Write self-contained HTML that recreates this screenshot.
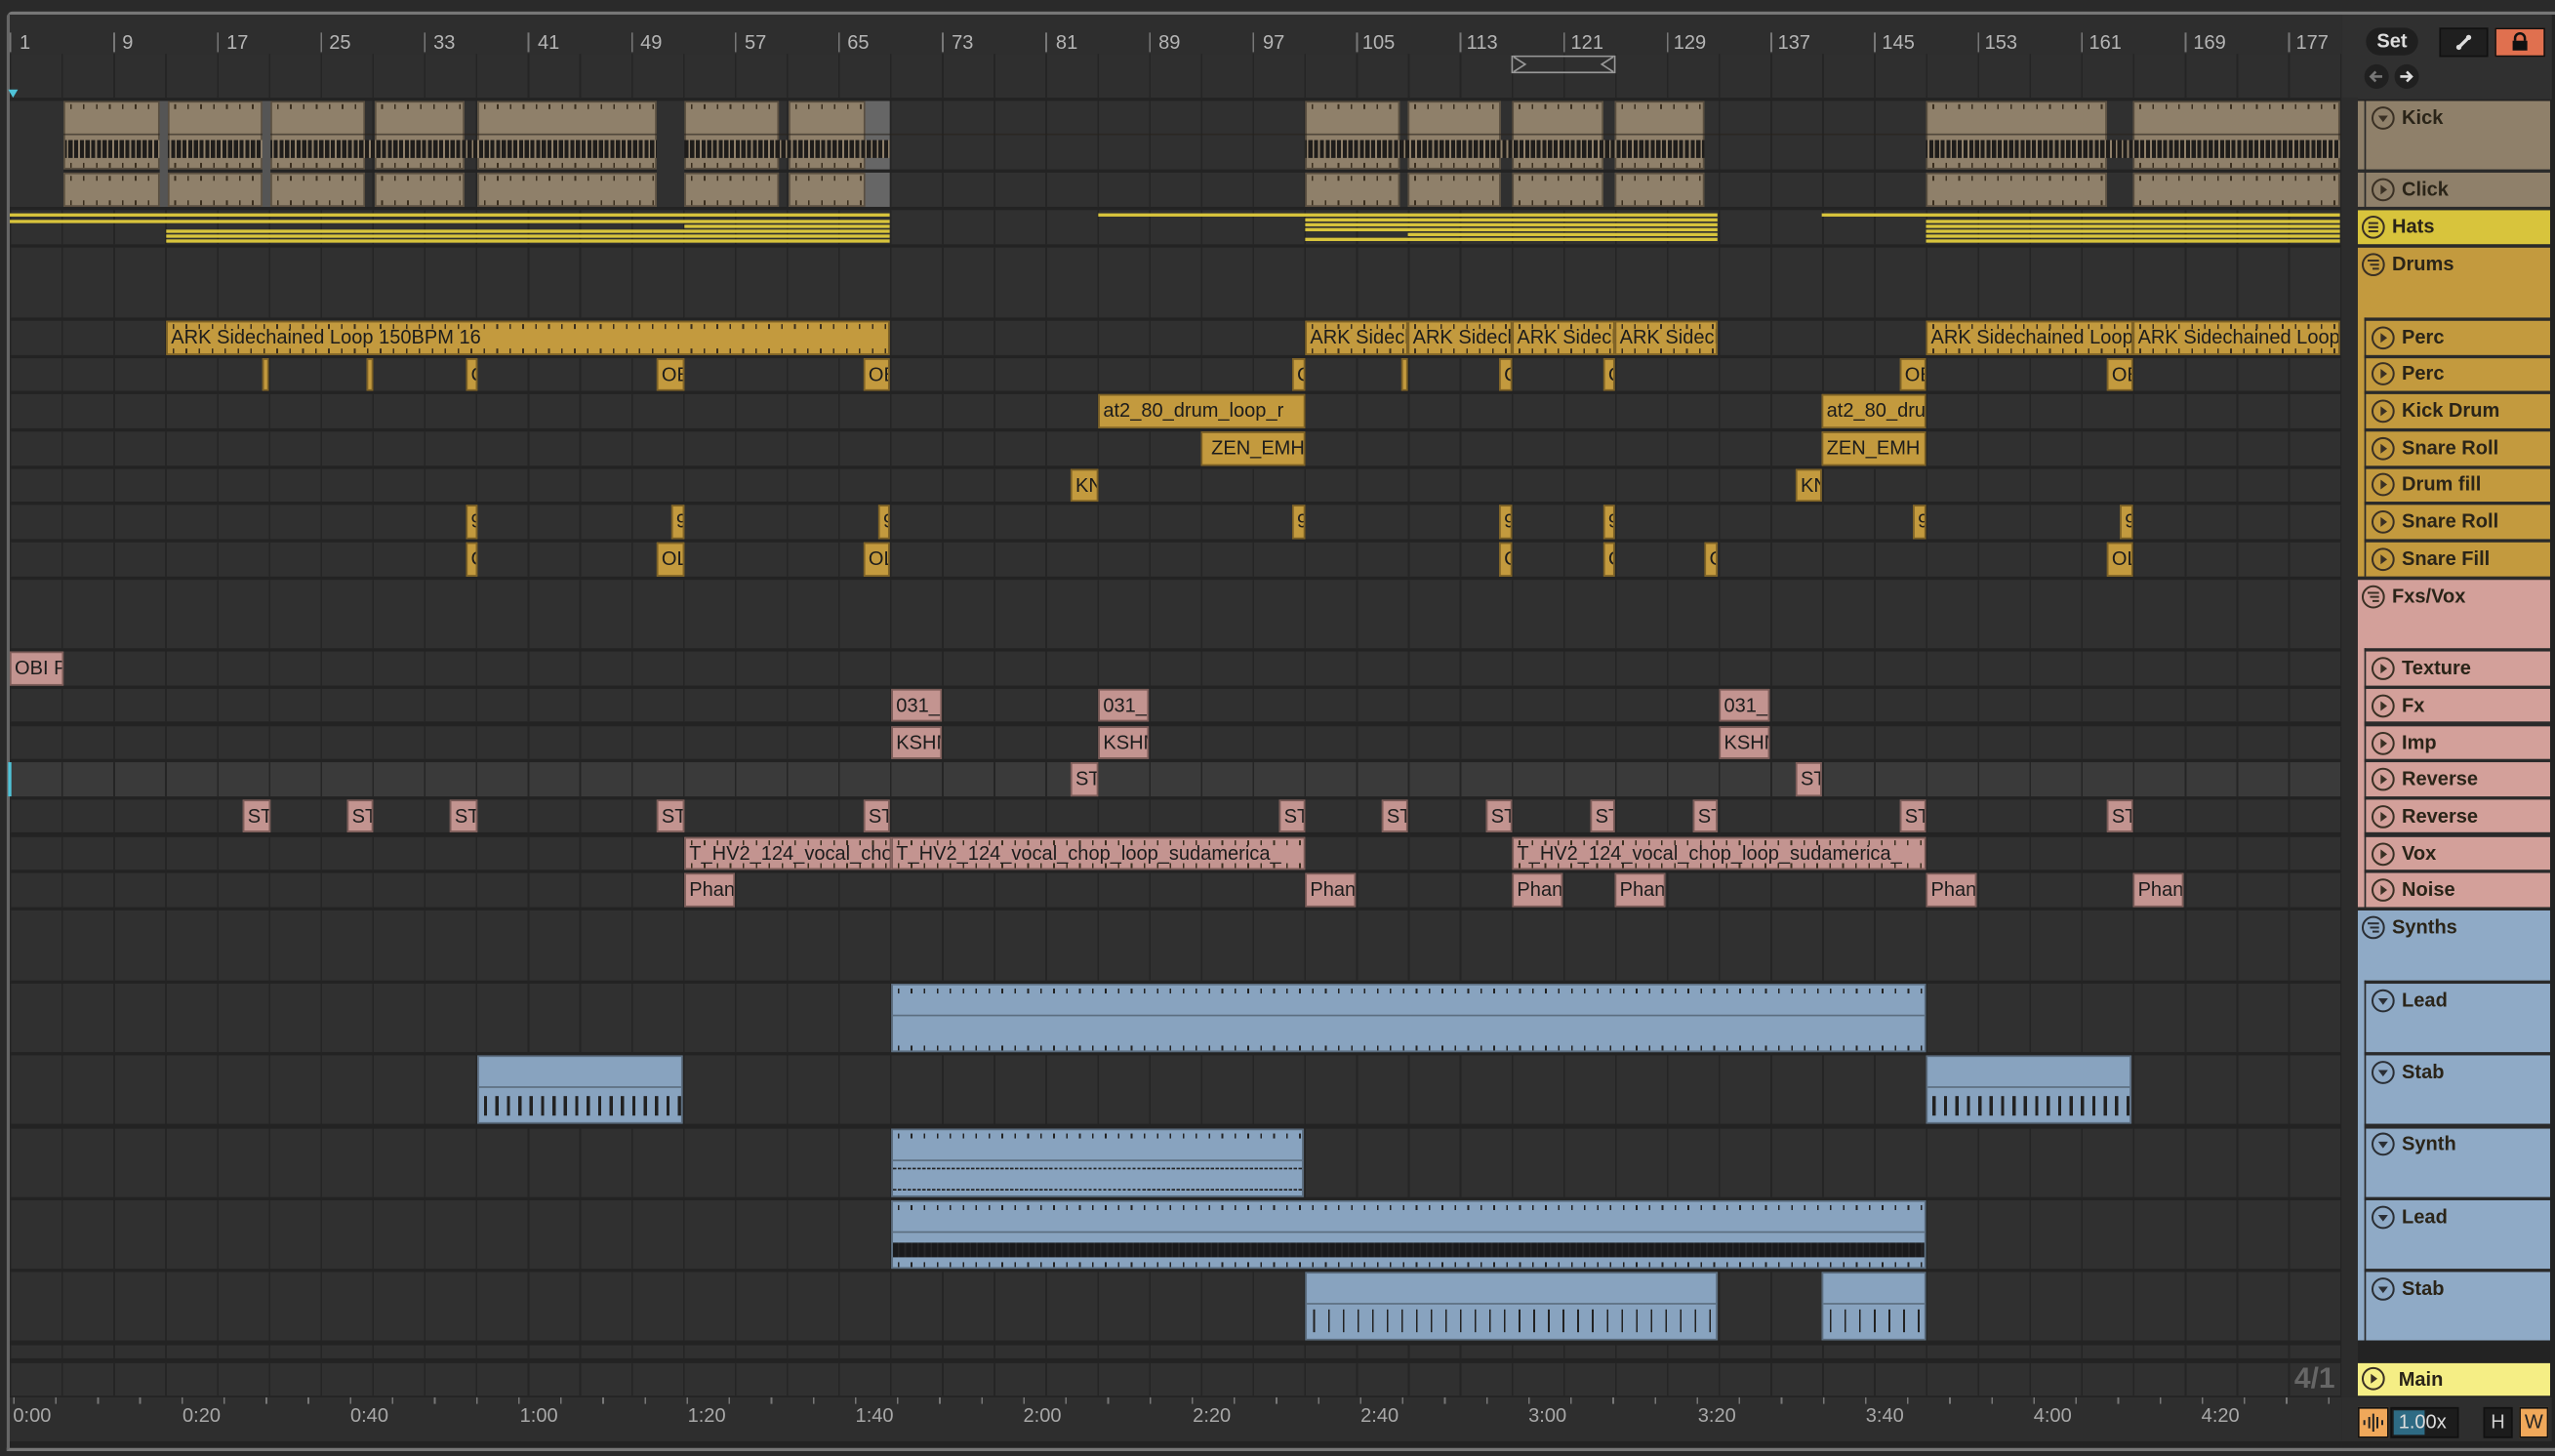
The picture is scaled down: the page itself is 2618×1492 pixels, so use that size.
<!DOCTYPE html>
<html><head><meta charset="utf-8"><style>
*{margin:0;padding:0}
html,body{width:2618px;height:1492px;overflow:hidden;background:#2a2a2a}
#w{position:absolute;left:0;top:0;width:1568px;height:894px;transform:scale(1.66964,1.66891);transform-origin:0 0;background:#2a2a2a;font-family:"Liberation Sans",sans-serif}
.frame{position:absolute;left:4px;top:7px;width:1562px;height:880px;border-top:2px solid #777;border-left:2px solid #666;border-bottom:2px solid #777;border-radius:4px 0 0 0;background:#232323}
.r{position:absolute;left:6px;width:1431px;background:#303030 repeating-linear-gradient(90deg,#252525 0 1px,transparent 1px 31.78px)}
.c{position:absolute;overflow:hidden;white-space:nowrap;font-size:12px;color:#1c1c1c;box-sizing:border-box;padding-left:2px;line-height:19px}
.tk{background-image:repeating-linear-gradient(90deg,transparent 0 3px,#3a2e1e 3px 4px,transparent 4px 7.945px),repeating-linear-gradient(90deg,transparent 0 3px,#3a2e1e 3px 4px,transparent 4px 7.945px);background-size:100% 3px,100% 3px;background-position:0 1px,0 100%;background-repeat:no-repeat}
.o{background-color:#c39a3e;border:1px solid #7e6226}
.p{background-color:#c39490;border:1px solid #7d5d59}
.t{background-color:#8f806a;border:1px solid #5a4f40}
.b{background-color:#88a3bf;border:1px solid #5c6e80}
.g{position:absolute;left:1447px;width:118px}
.h{position:absolute;left:1452px;width:113px;font-weight:bold;font-size:12px;color:#2a2418;box-sizing:border-box;padding-left:22px;line-height:21px}
.h svg,.g svg{position:absolute;left:3px;top:3px}
.gl{position:absolute;font-weight:bold;font-size:12px;color:#2a2418;line-height:21px;padding-left:21px}
.n{position:absolute;top:19px;font-size:12px;color:#b5b5b5}
.tm{position:absolute;top:862px;font-size:12px;color:#a8a8a8}
.hat{position:absolute;height:2px;background:#d8c43c}
</style></head><body><div id="w">
<div class="frame"></div>
<!-- top ruler -->
<div style="position:absolute;left:6px;top:9px;width:1431px;height:24px;background:#2e2e2e"></div>
<div class="r" style="top:33px;height:27px;background-color:#2f2f2f"></div>
<div style="position:absolute;left:6px;top:20px;width:1431px;height:12px;background:repeating-linear-gradient(90deg,#777 0 1px,transparent 1px 63.56px)"></div>
<span class="n" style="left:12px">1</span><span class="n" style="left:75px">9</span><span class="n" style="left:139px">17</span><span class="n" style="left:202px">25</span><span class="n" style="left:266px">33</span><span class="n" style="left:330px">41</span><span class="n" style="left:393px">49</span><span class="n" style="left:457px">57</span><span class="n" style="left:520px">65</span><span class="n" style="left:584px">73</span><span class="n" style="left:648px">81</span><span class="n" style="left:711px">89</span><span class="n" style="left:775px">97</span><span class="n" style="left:836px">105</span><span class="n" style="left:900px">113</span><span class="n" style="left:964px">121</span><span class="n" style="left:1027px">129</span><span class="n" style="left:1091px">137</span><span class="n" style="left:1155px">145</span><span class="n" style="left:1218px">153</span><span class="n" style="left:1282px">161</span><span class="n" style="left:1346px">169</span><span class="n" style="left:1409px">177</span>
<svg style="position:absolute;left:927px;top:34px" width="66" height="12"><rect x="1" y="0.5" width="63" height="10" fill="none" stroke="#999" stroke-width="1"/><path d="M2 1 L9 5.5 L2 10 M63 1 L56 5.5 L63 10" fill="none" stroke="#999"/></svg>
<div style="position:absolute;left:5px;top:55px;width:0;height:0;border-left:3px solid transparent;border-right:3px solid transparent;border-top:5px solid #4fc3d8"></div>

<!-- rows -->
<div class="r" style="top:62px;height:42px"></div>
<div class="r" style="top:106px;height:21px"></div>
<div class="r" style="top:129px;height:21px"></div>
<div class="r" style="top:152px;height:43px"></div>
<div class="r" style="top:197px;height:21px"></div>
<div class="r" style="top:220px;height:20px"></div>
<div class="r" style="top:242px;height:21px"></div>
<div class="r" style="top:265px;height:21px"></div>
<div class="r" style="top:288px;height:20px"></div>
<div class="r" style="top:310px;height:21px"></div>
<div class="r" style="top:333px;height:21px"></div>
<div class="r" style="top:356px;height:42px"></div>
<div class="r" style="top:400px;height:21px"></div>
<div class="r" style="top:423px;height:20px"></div>
<div class="r" style="top:446px;height:20px"></div>
<div class="r" style="top:468px;height:21px;background-color:#3a3a3a"></div>
<div class="r" style="top:491px;height:20px"></div>
<div class="r" style="top:514px;height:20px"></div>
<div class="r" style="top:536px;height:21px"></div>
<div class="r" style="top:559px;height:43px"></div>
<div class="r" style="top:604px;height:42px"></div>
<div class="r" style="top:648px;height:42px"></div>
<div class="r" style="top:693px;height:42px"></div>
<div class="r" style="top:737px;height:42px"></div>
<div class="r" style="top:781px;height:42px"></div>
<div class="r" style="top:826px;height:8px"></div>
<div class="r" style="top:837px;height:20px"></div>
<div style="position:absolute;left:5px;top:468px;width:2px;height:21px;background:#4fc3d8"></div>

<!-- Kick clips -->
<div id="kick">
<div class="c t tk" style="left:39px;top:62px;width:59px;height:42px"></div>
<div class="c t tk" style="left:103px;top:62px;width:58px;height:42px"></div>
<div class="c t tk" style="left:166px;top:62px;width:58px;height:42px"></div>
<div class="c t tk" style="left:230px;top:62px;width:55px;height:42px"></div>
<div class="c t tk" style="left:293px;top:62px;width:110px;height:42px"></div>
<div class="c t tk" style="left:420px;top:62px;width:58px;height:42px"></div>
<div class="c t tk" style="left:484px;top:62px;width:47px;height:42px"></div>
<div class="c" style="left:531px;top:62px;width:15px;height:42px;background:#666"></div>
<div class="c t tk" style="left:801px;top:62px;width:58px;height:42px"></div>
<div class="c t tk" style="left:864px;top:62px;width:57px;height:42px"></div>
<div class="c t tk" style="left:928px;top:62px;width:56px;height:42px"></div>
<div class="c t tk" style="left:991px;top:62px;width:55px;height:42px"></div>
<div class="c t tk" style="left:1182px;top:62px;width:111px;height:42px"></div>
<div class="c t tk" style="left:1309px;top:62px;width:127px;height:42px"></div>
</div>
<!-- kick waveform bands -->
<div style="position:absolute;left:39px;top:81px;width:1397px;height:2px;background:transparent"></div>
<div class="c" style="left:40px;top:86px;width:506px;height:11px;background:repeating-linear-gradient(90deg,#1e1c1a 0 1px,#8f806a 1px 2px,#1e1c1a 2px 3.5px)"></div>
<div class="c" style="left:801px;top:86px;width:245px;height:11px;background:repeating-linear-gradient(90deg,#1e1c1a 0 1px,#8f806a 1px 2px,#1e1c1a 2px 3.5px)"></div>
<div class="c" style="left:1182px;top:86px;width:254px;height:11px;background:repeating-linear-gradient(90deg,#1e1c1a 0 1px,#8f806a 1px 2px,#1e1c1a 2px 3.5px)"></div>
<div style="position:absolute;left:6px;top:82px;width:1431px;height:1px;background:rgba(40,35,28,.6)"></div>
<!-- gaps re-draw -->
<div style="position:absolute;left:98px;top:62px;width:5px;height:65px;background:#555"></div>
<div style="position:absolute;left:161px;top:62px;width:5px;height:65px;background:#555"></div>
<div style="position:absolute;left:403px;top:62px;width:17px;height:65px;background:#303030"></div>
<div style="position:absolute;left:6px;top:62px;width:33px;height:65px;background:#303030"></div>
<!-- Click clips -->
<div class="c t tk" style="left:39px;top:106px;width:59px;height:21px"></div>
<div class="c t tk" style="left:103px;top:106px;width:58px;height:21px"></div>
<div class="c t tk" style="left:166px;top:106px;width:58px;height:21px"></div>
<div class="c t tk" style="left:230px;top:106px;width:55px;height:21px"></div>
<div class="c t tk" style="left:293px;top:106px;width:110px;height:21px"></div>
<div class="c t tk" style="left:420px;top:106px;width:58px;height:21px"></div>
<div class="c t tk" style="left:484px;top:106px;width:47px;height:21px"></div>
<div class="c" style="left:531px;top:106px;width:15px;height:21px;background:#666"></div>
<div class="c t tk" style="left:801px;top:106px;width:58px;height:21px"></div>
<div class="c t tk" style="left:864px;top:106px;width:57px;height:21px"></div>
<div class="c t tk" style="left:928px;top:106px;width:56px;height:21px"></div>
<div class="c t tk" style="left:991px;top:106px;width:55px;height:21px"></div>
<div class="c t tk" style="left:1182px;top:106px;width:111px;height:21px"></div>
<div class="c t tk" style="left:1309px;top:106px;width:127px;height:21px"></div>

<!-- Hats -->
<div class="hat" style="left:6px;top:131px;width:540px"></div>
<div class="hat" style="left:6px;top:135px;width:540px"></div>
<div class="hat" style="left:420px;top:138px;width:126px"></div>
<div class="hat" style="left:102px;top:141px;width:444px"></div>
<div class="hat" style="left:102px;top:144px;width:444px"></div>
<div class="hat" style="left:102px;top:147px;width:444px"></div>
<div class="hat" style="left:674px;top:131px;width:380px"></div>
<div class="hat" style="left:801px;top:134px;width:253px"></div>
<div class="hat" style="left:801px;top:137px;width:253px"></div>
<div class="hat" style="left:801px;top:140px;width:253px"></div>
<div class="hat" style="left:864px;top:143px;width:190px"></div>
<div class="hat" style="left:801px;top:146px;width:253px"></div>
<div class="hat" style="left:1118px;top:131px;width:318px"></div>
<div class="hat" style="left:1182px;top:135px;width:254px"></div>
<div class="hat" style="left:1182px;top:138px;width:254px"></div>
<div class="hat" style="left:1182px;top:141px;width:254px"></div>
<div class="hat" style="left:1182px;top:144px;width:254px"></div>
<div class="hat" style="left:1182px;top:147px;width:254px"></div>

<!-- Perc 1 -->
<div class="c o tk" style="left:102px;top:197px;width:444px;height:21px">ARK Sidechained Loop 150BPM 16</div>
<div class="c o tk" style="left:801px;top:197px;width:63px;height:21px">ARK Sidechained</div>
<div class="c o tk" style="left:864px;top:197px;width:64px;height:21px">ARK Sidechained</div>
<div class="c o tk" style="left:928px;top:197px;width:63px;height:21px">ARK Sidechained</div>
<div class="c o tk" style="left:991px;top:197px;width:63px;height:21px">ARK Sidechained</div>
<div class="c o tk" style="left:1182px;top:197px;width:127px;height:21px">ARK Sidechained Loop</div>
<div class="c o tk" style="left:1309px;top:197px;width:127px;height:21px">ARK Sidechained Loop</div>
<!-- Perc 2 -->
<div class="c o" style="left:161px;top:220px;width:4px;height:20px"></div>
<div class="c o" style="left:225px;top:220px;width:4px;height:20px"></div>
<div class="c o" style="left:286px;top:220px;width:7px;height:20px">C</div>
<div class="c o" style="left:403px;top:220px;width:17px;height:20px">OB</div>
<div class="c o" style="left:530px;top:220px;width:16px;height:20px">OB</div>
<div class="c o" style="left:793px;top:220px;width:8px;height:20px">C</div>
<div class="c o" style="left:860px;top:220px;width:4px;height:20px"></div>
<div class="c o" style="left:920px;top:220px;width:8px;height:20px">C</div>
<div class="c o" style="left:984px;top:220px;width:7px;height:20px">C</div>
<div class="c o" style="left:1166px;top:220px;width:16px;height:20px">OB</div>
<div class="c o" style="left:1293px;top:220px;width:16px;height:20px">OB</div>
<!-- Kick Drum -->
<div class="c o" style="left:674px;top:242px;width:127px;height:21px">at2_80_drum_loop_r</div>
<div class="c o" style="left:1118px;top:242px;width:64px;height:21px">at2_80_drum</div>
<!-- Snare Roll -->
<div class="c o" style="left:737px;top:265px;width:64px;height:21px">&nbsp;ZEN_EMH</div>
<div class="c o" style="left:1118px;top:265px;width:64px;height:21px">ZEN_EMH</div>
<!-- Drum fill -->
<div class="c o" style="left:657px;top:288px;width:17px;height:20px">KN</div>
<div class="c o" style="left:1102px;top:288px;width:16px;height:20px">KN</div>
<!-- Snare Roll 2 -->
<div class="c o" style="left:286px;top:310px;width:7px;height:21px">9</div>
<div class="c o" style="left:412px;top:310px;width:8px;height:21px">9</div>
<div class="c o" style="left:539px;top:310px;width:7px;height:21px">9</div>
<div class="c o" style="left:793px;top:310px;width:8px;height:21px">9</div>
<div class="c o" style="left:920px;top:310px;width:8px;height:21px">9</div>
<div class="c o" style="left:984px;top:310px;width:7px;height:21px">9</div>
<div class="c o" style="left:1174px;top:310px;width:8px;height:21px">9</div>
<div class="c o" style="left:1301px;top:310px;width:8px;height:21px">9</div>
<!-- Snare Fill -->
<div class="c o" style="left:286px;top:333px;width:7px;height:21px">C</div>
<div class="c o" style="left:403px;top:333px;width:17px;height:21px">OL</div>
<div class="c o" style="left:530px;top:333px;width:16px;height:21px">OL</div>
<div class="c o" style="left:920px;top:333px;width:8px;height:21px">C</div>
<div class="c o" style="left:984px;top:333px;width:7px;height:21px">C</div>
<div class="c o" style="left:1046px;top:333px;width:8px;height:21px">C</div>
<div class="c o" style="left:1293px;top:333px;width:16px;height:21px">OL</div>
<!-- Texture -->
<div class="c p" style="left:6px;top:400px;width:33px;height:21px">OBI P</div>
<!-- Fx -->
<div class="c p" style="left:547px;top:423px;width:31px;height:20px">031_</div>
<div class="c p" style="left:674px;top:423px;width:31px;height:20px">031_</div>
<div class="c p" style="left:1055px;top:423px;width:31px;height:20px">031_</div>
<!-- Imp -->
<div class="c p" style="left:547px;top:446px;width:31px;height:20px">KSHM</div>
<div class="c p" style="left:674px;top:446px;width:31px;height:20px">KSHM</div>
<div class="c p" style="left:1055px;top:446px;width:31px;height:20px">KSHM</div>
<!-- Reverse -->
<div class="c p" style="left:657px;top:468px;width:17px;height:21px">ST</div>
<div class="c p" style="left:1102px;top:468px;width:16px;height:21px">ST</div>
<!-- Reverse 2 -->
<div class="c p" style="left:149px;top:491px;width:17px;height:20px">ST</div>
<div class="c p" style="left:213px;top:491px;width:16px;height:20px">ST</div>
<div class="c p" style="left:276px;top:491px;width:17px;height:20px">ST</div>
<div class="c p" style="left:403px;top:491px;width:17px;height:20px">ST</div>
<div class="c p" style="left:530px;top:491px;width:16px;height:20px">ST</div>
<div class="c p" style="left:785px;top:491px;width:16px;height:20px">ST</div>
<div class="c p" style="left:848px;top:491px;width:16px;height:20px">ST</div>
<div class="c p" style="left:912px;top:491px;width:16px;height:20px">ST</div>
<div class="c p" style="left:976px;top:491px;width:15px;height:20px">ST</div>
<div class="c p" style="left:1039px;top:491px;width:15px;height:20px">ST</div>
<div class="c p" style="left:1166px;top:491px;width:16px;height:20px">ST</div>
<div class="c p" style="left:1293px;top:491px;width:16px;height:20px">ST</div>
<!-- Vox -->
<div class="c p tk" style="left:420px;top:514px;width:127px;height:20px;background-color:#c39490">T_HV2_124_vocal_chop</div>
<div class="c p tk" style="left:547px;top:514px;width:254px;height:20px;background-color:#c39490">T_HV2_124_vocal_chop_loop_sudamerica_</div>
<div class="c p tk" style="left:928px;top:514px;width:254px;height:20px;background-color:#c39490">T_HV2_124_vocal_chop_loop_sudamerica_</div>
<!-- Noise -->
<div class="c p" style="left:420px;top:536px;width:31px;height:21px">Phan</div>
<div class="c p" style="left:801px;top:536px;width:31px;height:21px">Phan</div>
<div class="c p" style="left:928px;top:536px;width:31px;height:21px">Phan</div>
<div class="c p" style="left:991px;top:536px;width:31px;height:21px">Phan</div>
<div class="c p" style="left:1182px;top:536px;width:31px;height:21px">Phan</div>
<div class="c p" style="left:1309px;top:536px;width:31px;height:21px">Phan</div>

<!-- Synth clips -->
<div class="c b tk" style="left:547px;top:604px;width:635px;height:42px;background-image:linear-gradient(#5c6e80,#5c6e80),repeating-linear-gradient(90deg,transparent 0 3px,#222 3px 4px,transparent 4px 7.945px),repeating-linear-gradient(90deg,transparent 0 3px,#222 3px 4px,transparent 4px 7.945px);background-size:100% 1px,100% 3px,100% 3px;background-position:0 18px,0 2px,0 100%;background-repeat:no-repeat"></div>
<div class="c b tk" style="left:293px;top:648px;width:126px;height:42px;background-image:linear-gradient(#5c6e80,#5c6e80),repeating-linear-gradient(90deg,transparent 0 3px,#222 3px 5px,transparent 5px 7px);background-size:100% 1px,100% 12px;background-position:0 18px,0 24px;background-repeat:no-repeat"></div>
<div class="c b tk" style="left:1182px;top:648px;width:126px;height:42px;background-image:linear-gradient(#5c6e80,#5c6e80),repeating-linear-gradient(90deg,transparent 0 3px,#222 3px 5px,transparent 5px 7px);background-size:100% 1px,100% 12px;background-position:0 18px,0 24px;background-repeat:no-repeat"></div>
<div class="c b" style="left:547px;top:693px;width:253px;height:42px;background-image:linear-gradient(#5c6e80,#5c6e80),repeating-linear-gradient(90deg,#222 0 2px,transparent 2px 3px),repeating-linear-gradient(90deg,#222 0 2px,transparent 2px 3px),repeating-linear-gradient(90deg,transparent 0 3px,#222 3px 4px,transparent 4px 7.945px);background-size:100% 1px,100% 1px,100% 1px,100% 3px;background-position:0 18px,0 23px,0 36px,0 2px;background-repeat:no-repeat"></div>
<div class="c b tk" style="left:547px;top:737px;width:635px;height:42px;background-image:linear-gradient(#5c6e80,#5c6e80),repeating-linear-gradient(90deg,#1a1a1c 0 3px,#262628 3px 4px),repeating-linear-gradient(90deg,transparent 0 3px,#222 3px 4px,transparent 4px 7.945px),repeating-linear-gradient(90deg,transparent 0 3px,#222 3px 4px,transparent 4px 7.945px);background-size:100% 1px,100% 9px,100% 3px,100% 3px;background-position:0 18px,0 25px,0 2px,0 100%;background-repeat:no-repeat"></div>
<div class="c b tk" style="left:801px;top:781px;width:253px;height:42px;background-image:linear-gradient(#5c6e80,#5c6e80),repeating-linear-gradient(90deg,transparent 0 4px,#222 4px 5px,transparent 5px 9px);background-size:100% 1px,100% 14px;background-position:0 18px,0 22px;background-repeat:no-repeat"></div>
<div class="c b tk" style="left:1118px;top:781px;width:64px;height:42px;background-image:linear-gradient(#5c6e80,#5c6e80),repeating-linear-gradient(90deg,transparent 0 4px,#222 4px 5px,transparent 5px 9px);background-size:100% 1px,100% 14px;background-position:0 18px,0 22px;background-repeat:no-repeat"></div>

<!-- right panel -->
<div style="position:absolute;left:1437px;top:9px;width:129px;height:52px;background:#303030"></div>
<div style="position:absolute;left:1437px;top:60px;width:10px;height:798px;background:#2c2c2c"></div>
<div style="position:absolute;left:1452px;top:17px;width:32px;height:17px;border-radius:9px;background:#1f1f1f;color:#ddd;font-size:12px;font-weight:bold;text-align:center;line-height:17px">Set</div>
<div style="position:absolute;left:1497px;top:17px;width:28px;height:16px;background:#1f1f1f;border:1px solid #111"><svg width="28" height="16"><path d="M11 11 L17 5" stroke="#ddd" stroke-width="2"/><circle cx="11" cy="11" r="1.6" fill="#ddd"/><circle cx="17" cy="5" r="1.6" fill="#ddd"/></svg></div>
<div style="position:absolute;left:1531px;top:17px;width:29px;height:16px;background:#e0704f;border:1px solid #111"><svg width="29" height="16"><rect x="10" y="7" width="9" height="6" fill="#111"/><path d="M11.5 7 V5.5 a3 3 0 0 1 6 0 V7" stroke="#111" stroke-width="1.5" fill="none"/></svg></div>
<svg style="position:absolute;left:1450px;top:38px" width="40" height="18"><circle cx="8.5" cy="9" r="7.5" fill="#202020"/><circle cx="27" cy="9" r="7.5" fill="#202020"/><path d="M12 9 H5 M8 6 L5 9 L8 12" stroke="#777" stroke-width="1.5" fill="none"/><path d="M23 9 H30 M27 6 L30 9 L27 12" stroke="#ddd" stroke-width="1.5" fill="none"/></svg>

<!-- group strips -->
<div class="g" style="top:62px;height:65px;background:#8f806a"></div>
<div class="g" style="top:129px;height:21px;background:#d8c43c"></div>
<div class="g" style="top:152px;height:202px;background:#c39a3e"></div>
<div class="g" style="top:356px;height:201px;background:#d3a09a"></div>
<div class="g" style="top:559px;height:264px;background:#8faac6"></div>
<div class="g" style="top:837px;height:20px;background:#f5ee85"></div>
<!-- child header separators -->
<div style="position:absolute;left:1451px;top:62px;width:1px;height:65px;background:#2a2a2a"></div>
<div style="position:absolute;left:1451px;top:195px;width:1px;height:159px;background:#2a2a2a"></div>
<div style="position:absolute;left:1451px;top:398px;width:1px;height:159px;background:#2a2a2a"></div>
<div style="position:absolute;left:1451px;top:602px;width:1px;height:221px;background:#2a2a2a"></div>
<div style="position:absolute;left:1447px;top:104px;width:118px;height:2px;background:#2a2a2a"></div>
<div style="position:absolute;left:1447px;top:127px;width:118px;height:2px;background:#2a2a2a"></div>
<div style="position:absolute;left:1447px;top:150px;width:118px;height:2px;background:#2a2a2a"></div>
<div style="position:absolute;left:1451px;top:195px;width:114px;height:2px;background:#2a2a2a"></div>
<div style="position:absolute;left:1451px;top:218px;width:114px;height:2px;background:#2a2a2a"></div>
<div style="position:absolute;left:1451px;top:240px;width:114px;height:2px;background:#2a2a2a"></div>
<div style="position:absolute;left:1451px;top:263px;width:114px;height:2px;background:#2a2a2a"></div>
<div style="position:absolute;left:1451px;top:286px;width:114px;height:2px;background:#2a2a2a"></div>
<div style="position:absolute;left:1451px;top:308px;width:114px;height:2px;background:#2a2a2a"></div>
<div style="position:absolute;left:1451px;top:331px;width:114px;height:2px;background:#2a2a2a"></div>
<div style="position:absolute;left:1447px;top:354px;width:118px;height:2px;background:#2a2a2a"></div>
<div style="position:absolute;left:1451px;top:398px;width:114px;height:2px;background:#2a2a2a"></div>
<div style="position:absolute;left:1451px;top:421px;width:114px;height:2px;background:#2a2a2a"></div>
<div style="position:absolute;left:1451px;top:443px;width:114px;height:3px;background:#2a2a2a"></div>
<div style="position:absolute;left:1451px;top:466px;width:114px;height:2px;background:#2a2a2a"></div>
<div style="position:absolute;left:1451px;top:489px;width:114px;height:2px;background:#2a2a2a"></div>
<div style="position:absolute;left:1451px;top:511px;width:114px;height:3px;background:#2a2a2a"></div>
<div style="position:absolute;left:1451px;top:534px;width:114px;height:2px;background:#2a2a2a"></div>
<div style="position:absolute;left:1447px;top:557px;width:118px;height:2px;background:#2a2a2a"></div>
<div style="position:absolute;left:1451px;top:602px;width:114px;height:2px;background:#2a2a2a"></div>
<div style="position:absolute;left:1451px;top:646px;width:114px;height:2px;background:#2a2a2a"></div>
<div style="position:absolute;left:1451px;top:690px;width:114px;height:3px;background:#2a2a2a"></div>
<div style="position:absolute;left:1451px;top:735px;width:114px;height:2px;background:#2a2a2a"></div>
<div style="position:absolute;left:1451px;top:779px;width:114px;height:2px;background:#2a2a2a"></div>

<!-- header labels -->
<div class="h" style="top:62px">Kick<svg width="15" height="15"><circle cx="7.5" cy="7.5" r="6.5" fill="none" stroke="#3a3024" stroke-width="1.2"/><path d="M4.5 6 L10.5 6 L7.5 10 Z" fill="#3a3024"/></svg></div>
<div class="h" style="top:106px">Click<svg width="15" height="15"><circle cx="7.5" cy="7.5" r="6.5" fill="none" stroke="#3a3024" stroke-width="1.2"/><path d="M6 4.5 L10 7.5 L6 10.5 Z" fill="#3a3024"/></svg></div>
<div class="h" style="top:129px;left:1447px;padding-left:21px">Hats<svg width="15" height="15" style="left:2px"><circle cx="7.5" cy="7.5" r="6.5" fill="none" stroke="#3a3024" stroke-width="1.2"/><path d="M4.5 5 H10.5 M4.5 7.5 H10.5 M4.5 10 H10.5" stroke="#3a3024" stroke-width="1.2"/></svg></div>
<div class="h" style="top:152px;left:1447px;padding-left:21px">Drums<svg width="15" height="15" style="left:2px"><circle cx="7.5" cy="7.5" r="6.5" fill="none" stroke="#3a3024" stroke-width="1.2"/><path d="M4 5 H11 M5.5 7.5 H11 M7 10 H11" stroke="#3a3024" stroke-width="1.2"/></svg></div>
<div class="h" style="top:197px">Perc<svg width="15" height="15"><circle cx="7.5" cy="7.5" r="6.5" fill="none" stroke="#3a3024" stroke-width="1.2"/><path d="M6 4.5 L10 7.5 L6 10.5 Z" fill="#3a3024"/></svg></div>
<div class="h" style="top:219px">Perc<svg width="15" height="15"><circle cx="7.5" cy="7.5" r="6.5" fill="none" stroke="#3a3024" stroke-width="1.2"/><path d="M6 4.5 L10 7.5 L6 10.5 Z" fill="#3a3024"/></svg></div>
<div class="h" style="top:242px">Kick Drum<svg width="15" height="15"><circle cx="7.5" cy="7.5" r="6.5" fill="none" stroke="#3a3024" stroke-width="1.2"/><path d="M6 4.5 L10 7.5 L6 10.5 Z" fill="#3a3024"/></svg></div>
<div class="h" style="top:265px">Snare Roll<svg width="15" height="15"><circle cx="7.5" cy="7.5" r="6.5" fill="none" stroke="#3a3024" stroke-width="1.2"/><path d="M6 4.5 L10 7.5 L6 10.5 Z" fill="#3a3024"/></svg></div>
<div class="h" style="top:287px">Drum fill<svg width="15" height="15"><circle cx="7.5" cy="7.5" r="6.5" fill="none" stroke="#3a3024" stroke-width="1.2"/><path d="M6 4.5 L10 7.5 L6 10.5 Z" fill="#3a3024"/></svg></div>
<div class="h" style="top:310px">Snare Roll<svg width="15" height="15"><circle cx="7.5" cy="7.5" r="6.5" fill="none" stroke="#3a3024" stroke-width="1.2"/><path d="M6 4.5 L10 7.5 L6 10.5 Z" fill="#3a3024"/></svg></div>
<div class="h" style="top:333px">Snare Fill<svg width="15" height="15"><circle cx="7.5" cy="7.5" r="6.5" fill="none" stroke="#3a3024" stroke-width="1.2"/><path d="M6 4.5 L10 7.5 L6 10.5 Z" fill="#3a3024"/></svg></div>
<div class="h" style="top:356px;left:1447px;padding-left:21px">Fxs/Vox<svg width="15" height="15" style="left:2px"><circle cx="7.5" cy="7.5" r="6.5" fill="none" stroke="#3a3024" stroke-width="1.2"/><path d="M4 5 H11 M5.5 7.5 H11 M7 10 H11" stroke="#3a3024" stroke-width="1.2"/></svg></div>
<div class="h" style="top:400px">Texture<svg width="15" height="15"><circle cx="7.5" cy="7.5" r="6.5" fill="none" stroke="#3a3024" stroke-width="1.2"/><path d="M6 4.5 L10 7.5 L6 10.5 Z" fill="#3a3024"/></svg></div>
<div class="h" style="top:423px">Fx<svg width="15" height="15"><circle cx="7.5" cy="7.5" r="6.5" fill="none" stroke="#3a3024" stroke-width="1.2"/><path d="M6 4.5 L10 7.5 L6 10.5 Z" fill="#3a3024"/></svg></div>
<div class="h" style="top:446px">Imp<svg width="15" height="15"><circle cx="7.5" cy="7.5" r="6.5" fill="none" stroke="#3a3024" stroke-width="1.2"/><path d="M6 4.5 L10 7.5 L6 10.5 Z" fill="#3a3024"/></svg></div>
<div class="h" style="top:468px">Reverse<svg width="15" height="15"><circle cx="7.5" cy="7.5" r="6.5" fill="none" stroke="#3a3024" stroke-width="1.2"/><path d="M6 4.5 L10 7.5 L6 10.5 Z" fill="#3a3024"/></svg></div>
<div class="h" style="top:491px">Reverse<svg width="15" height="15"><circle cx="7.5" cy="7.5" r="6.5" fill="none" stroke="#3a3024" stroke-width="1.2"/><path d="M6 4.5 L10 7.5 L6 10.5 Z" fill="#3a3024"/></svg></div>
<div class="h" style="top:514px">Vox<svg width="15" height="15"><circle cx="7.5" cy="7.5" r="6.5" fill="none" stroke="#3a3024" stroke-width="1.2"/><path d="M6 4.5 L10 7.5 L6 10.5 Z" fill="#3a3024"/></svg></div>
<div class="h" style="top:536px">Noise<svg width="15" height="15"><circle cx="7.5" cy="7.5" r="6.5" fill="none" stroke="#3a3024" stroke-width="1.2"/><path d="M6 4.5 L10 7.5 L6 10.5 Z" fill="#3a3024"/></svg></div>
<div class="h" style="top:559px;left:1447px;padding-left:21px">Synths<svg width="15" height="15" style="left:2px"><circle cx="7.5" cy="7.5" r="6.5" fill="none" stroke="#2a2e34" stroke-width="1.2"/><path d="M4 5 H11 M5.5 7.5 H11 M7 10 H11" stroke="#2a2e34" stroke-width="1.2"/></svg></div>
<div class="h" style="top:604px">Lead<svg width="15" height="15"><circle cx="7.5" cy="7.5" r="6.5" fill="none" stroke="#2a2e34" stroke-width="1.2"/><path d="M4.5 6 L10.5 6 L7.5 10 Z" fill="#2a2e34"/></svg></div>
<div class="h" style="top:648px">Stab<svg width="15" height="15"><circle cx="7.5" cy="7.5" r="6.5" fill="none" stroke="#2a2e34" stroke-width="1.2"/><path d="M4.5 6 L10.5 6 L7.5 10 Z" fill="#2a2e34"/></svg></div>
<div class="h" style="top:692px">Synth<svg width="15" height="15"><circle cx="7.5" cy="7.5" r="6.5" fill="none" stroke="#2a2e34" stroke-width="1.2"/><path d="M4.5 6 L10.5 6 L7.5 10 Z" fill="#2a2e34"/></svg></div>
<div class="h" style="top:737px">Lead<svg width="15" height="15"><circle cx="7.5" cy="7.5" r="6.5" fill="none" stroke="#2a2e34" stroke-width="1.2"/><path d="M4.5 6 L10.5 6 L7.5 10 Z" fill="#2a2e34"/></svg></div>
<div class="h" style="top:781px">Stab<svg width="15" height="15"><circle cx="7.5" cy="7.5" r="6.5" fill="none" stroke="#2a2e34" stroke-width="1.2"/><path d="M4.5 6 L10.5 6 L7.5 10 Z" fill="#2a2e34"/></svg></div>
<div class="h" style="top:837px;left:1447px;padding-left:25px;line-height:20px">Main<svg width="15" height="15" style="left:2px;top:2px"><circle cx="7.5" cy="7.5" r="6.5" fill="none" stroke="#3a3024" stroke-width="1.2"/><path d="M6 4.5 L10 7.5 L6 10.5 Z" fill="#3a3024"/></svg></div>
<div style="position:absolute;left:1408px;top:836px;font-size:18px;font-weight:bold;color:#666">4/1</div>

<!-- bottom time ruler -->
<div style="position:absolute;left:6px;top:858px;width:1431px;height:27px;background:#2e2e2e"></div>
<div style="position:absolute;left:8px;top:858px;width:1429px;height:4px;background:repeating-linear-gradient(90deg,#777 0 1px,transparent 1px 25.83px)"></div>
<span class="tm" style="left:8px">0:00</span><span class="tm" style="left:112px">0:20</span><span class="tm" style="left:215px">0:40</span><span class="tm" style="left:319px">1:00</span><span class="tm" style="left:422px">1:20</span><span class="tm" style="left:525px">1:40</span><span class="tm" style="left:628px">2:00</span><span class="tm" style="left:732px">2:20</span><span class="tm" style="left:835px">2:40</span><span class="tm" style="left:938px">3:00</span><span class="tm" style="left:1042px">3:20</span><span class="tm" style="left:1145px">3:40</span><span class="tm" style="left:1248px">4:00</span><span class="tm" style="left:1351px">4:20</span>
<div style="position:absolute;left:1437px;top:858px;width:129px;height:27px;background:#2e2e2e"></div>
<div style="position:absolute;left:1447px;top:864px;width:17px;height:17px;background:#f0a85a;border:1px solid #111"><svg width="17" height="17"><path d="M3 7v3M6 5v7M8.5 3v11M11 5v7M14 7v3" stroke="#222" stroke-width="1.2"/></svg></div>
<div style="position:absolute;left:1467px;top:864px;width:40px;height:17px;background:#1c1c1c;border:1px solid #111;font-size:12px;color:#ddd;line-height:17px"><span style="position:absolute;left:1px;top:1px;width:19px;height:15px;background:#2e6b84"></span><span style="position:relative;padding-left:4px">1.00x</span></div>
<div style="position:absolute;left:1524px;top:864px;width:16px;height:17px;background:#1c1c1c;border:1px solid #111;color:#ccc;font-size:12px;text-align:center;line-height:17px">H</div>
<div style="position:absolute;left:1546px;top:864px;width:16px;height:17px;background:#f0a85a;border:1px solid #111;color:#222;font-size:12px;text-align:center;line-height:17px">W</div>
</div></body></html>
